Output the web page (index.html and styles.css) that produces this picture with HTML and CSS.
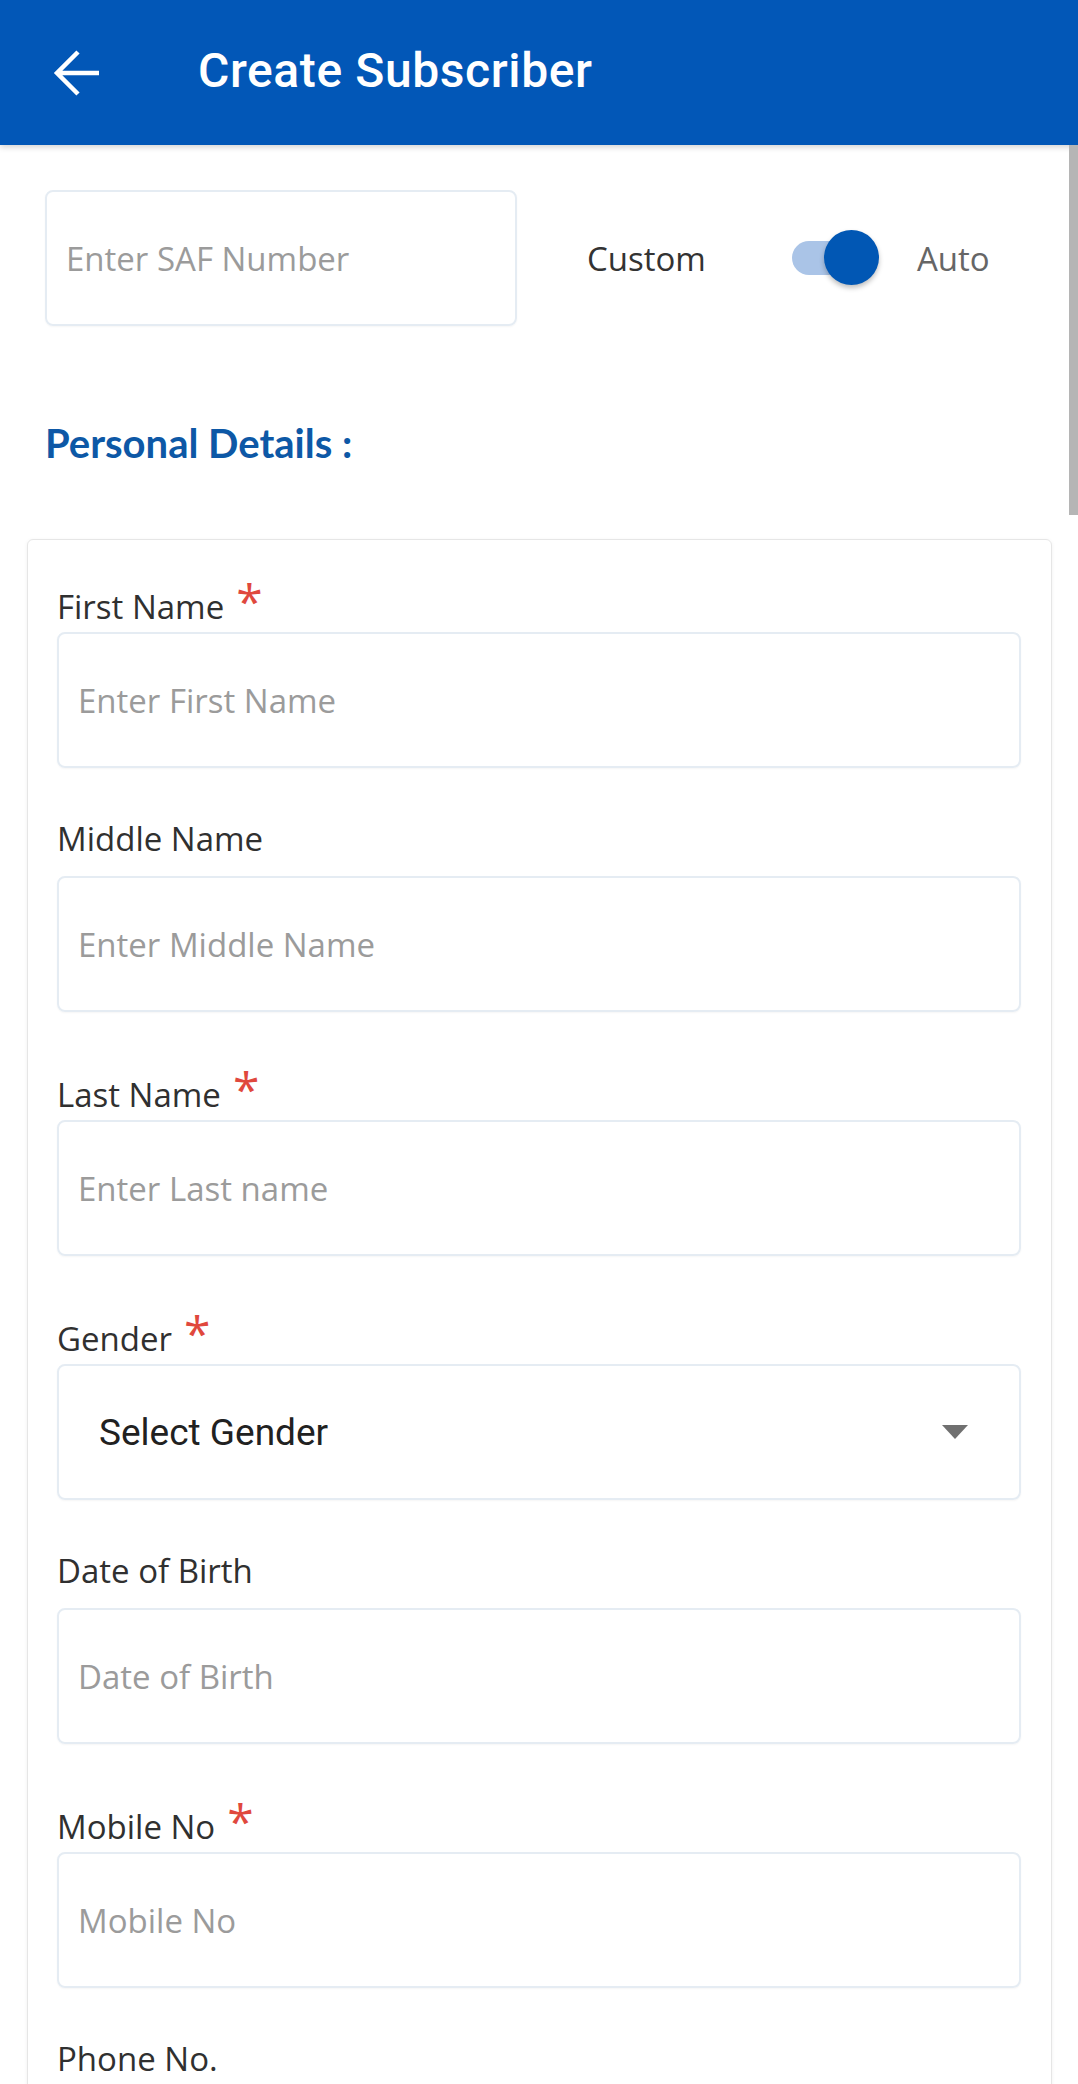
FILE: index.html
```html
<!DOCTYPE html>
<html lang="en">
<head>
<meta charset="utf-8">
<title>Create Subscriber</title>
<link rel="stylesheet" href="styles.css">
</head>
<body>
<header class="appbar">
  <svg class="back" width="50" height="50" viewBox="0 0 50 50" aria-hidden="true">
    <path d="M47 25 H6 M26 4 L5 25 L26 46" fill="none" stroke="#ffffff" stroke-width="4.5" stroke-linecap="butt" stroke-linejoin="miter"/>
  </svg>
  <h1 class="title">Create Subscriber</h1>
</header>
<div class="scroll-thumb"></div>
<main class="content">
  <div class="saf-row">
    <div class="saf-input"><span class="placeholder">Enter SAF Number</span></div>
    <span class="opt opt-custom">Custom</span>
    <div class="toggle"><span class="track"></span><span class="knob"></span></div>
    <span class="opt opt-auto">Auto</span>
  </div>
  <h2 class="section">Personal Details :</h2>
  <section class="card">
    <div class="field">
      <div class="label req">First Name<span class="star">*</span></div>
      <div class="input"><span class="placeholder">Enter First Name</span></div>
    </div>
    <div class="field">
      <div class="label">Middle Name</div>
      <div class="input"><span class="placeholder">Enter Middle Name</span></div>
    </div>
    <div class="field">
      <div class="label req">Last Name<span class="star">*</span></div>
      <div class="input"><span class="placeholder">Enter Last name</span></div>
    </div>
    <div class="field">
      <div class="label req">Gender<span class="star">*</span></div>
      <div class="input select"><span class="select-value">Select Gender</span>
        <svg class="caret" width="26" height="14" viewBox="0 0 26 14" aria-hidden="true"><polygon points="0,0 26,0 13,14" fill="#707070"/></svg>
      </div>
    </div>
    <div class="field">
      <div class="label">Date of Birth</div>
      <div class="input"><span class="placeholder">Date of Birth</span></div>
    </div>
    <div class="field">
      <div class="label req">Mobile No<span class="star">*</span></div>
      <div class="input"><span class="placeholder">Mobile No</span></div>
    </div>
    <div class="field">
      <div class="label">Phone No.</div>
      <div class="input"></div>
    </div>
  </section>
</main>
</body>
</html>
```

FILE: styles.css
```css
html, body {
  margin: 0;
  padding: 0;
  overflow: hidden;
  background: #ffffff;
}
body {
  font-family: "Open Sans", "Noto Sans", sans-serif;
  color: #333333;
  width: 1078px;
  height: 2084px;
}
.appbar {
  height: 145px;
  background: #0257b7;
  display: flex;
  align-items: center;
  padding-left: 52px;
  box-shadow: 0 2px 6px rgba(0, 0, 0, 0.18);
  position: relative;
  z-index: 2;
}
.back {
  flex: none;
  display: block;
}
.title {
  margin: 0 0 0 96px;
  padding-bottom: 4px;
  font-family: Roboto, "Liberation Sans", sans-serif;
  font-weight: 500;
  font-size: 48px;
  letter-spacing: 0.6px;
  color: #ffffff;
  line-height: normal;
}
.scroll-thumb {
  position: fixed;
  top: 145px;
  right: 0;
  width: 9px;
  height: 370px;
  background: #b5b5b5;
  z-index: 3;
}
.content {
  padding-top: 45px;
}
.saf-row {
  display: flex;
  align-items: center;
  padding-left: 45px;
  height: 136px;
}
.saf-input {
  width: 472px;
  height: 136px;
  box-sizing: border-box;
  border: 2px solid #e5ecf3;
  border-radius: 8px;
  display: flex;
  align-items: center;
  padding-left: 19px;
  box-shadow: 0 1px 2px rgba(0, 0, 0, 0.04);
}
.placeholder {
  font-size: 33px;
  color: #9b9b9b;
}
.opt {
  font-size: 33px;
}
.opt-custom {
  margin-left: 70px;
  color: #333333;
}
.opt-auto {
  margin-left: 38px;
  color: #666666;
}
.toggle {
  margin-left: 86px;
  width: 87px;
  height: 56px;
  display: flex;
  align-items: center;
  position: relative;
}
.track {
  width: 78px;
  height: 34px;
  border-radius: 17px;
  background: #aac4e7;
}
.knob {
  position: absolute;
  right: 0;
  top: 0;
  width: 55px;
  height: 55px;
  border-radius: 50%;
  background: #0157b4;
  box-shadow: 0 3px 5px rgba(0, 0, 0, 0.25);
}
.section {
  margin: 93px 0 0 45px;
  font-family: Lato, "Open Sans", sans-serif;
  font-weight: 700;
  font-size: 40px;
  line-height: 48px;
  color: #0d58a6;
}
.card {
  margin: 72px 26px 0 27px;
  border: 1px solid #e6e6e6;
  border-radius: 6px;
  box-shadow: 0 1px 4px rgba(0, 0, 0, 0.06);
  padding: 32px 30px 40px 29px;
  display: flex;
  flex-direction: column;
  gap: 48px;
}
.field {
  display: flex;
  flex-direction: column;
}
.label {
  height: 60px;
  box-sizing: border-box;
  display: flex;
  align-items: flex-end;
  font-size: 33px;
  line-height: 32px;
  color: #303030;
  padding-bottom: 21px;
}
.label.req {
  padding-bottom: 9px;
}
.star {
  color: #e0483d;
  font-size: 48px;
  line-height: 0;
  margin-left: 12px;
  align-self: flex-start;
  padding-top: 29px;
}
.input {
  height: 136px;
  box-sizing: border-box;
  border: 2px solid #e5ecf3;
  border-radius: 8px;
  display: flex;
  align-items: center;
  padding-left: 19px;
  box-shadow: 0 1px 2px rgba(0, 0, 0, 0.04);
}
.select {
  padding-left: 40px;
  padding-right: 51px;
  justify-content: space-between;
}
.select-value {
  font-family: Roboto, "Liberation Sans", sans-serif;
  font-size: 37px;
  color: #212121;
}
.caret {
  display: block;
}
```
